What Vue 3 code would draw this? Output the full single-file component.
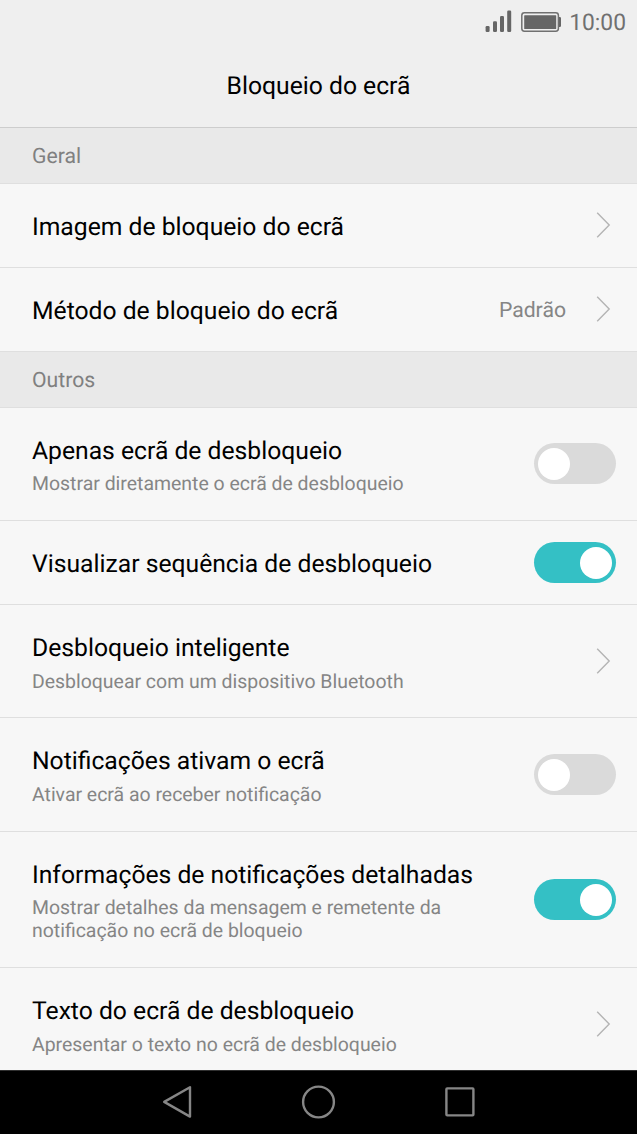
<script setup>
const sections = [
  {
    title: 'Geral',
    rows: [
      { label: 'Imagem de bloqueio do ecrã', control: 'arrow', size: 'single raised' },
      { label: 'Método de bloqueio do ecrã', value: 'Padrão', control: 'arrow', size: 'single raised' },
    ],
  },
  {
    title: 'Outros',
    rows: [
      { label: 'Apenas ecrã de desbloqueio', note: ['Mostrar diretamente o ecrã de desbloqueio'], control: 'off', size: 'double raised' },
      { label: 'Visualizar sequência de desbloqueio', control: 'on', size: 'single' },
      { label: 'Desbloqueio inteligente', note: ['Desbloquear com um dispositivo Bluetooth'], control: 'arrow', size: 'double spaced' },
      { label: 'Notificações ativam o ecrã', note: ['Ativar ecrã ao receber notificação'], control: 'off', size: 'double-tall spaced' },
      { label: 'Informações de notificações detalhadas', note: ['Mostrar detalhes da mensagem e remetente da', 'notificação no ecrã de bloqueio'], control: 'on', size: 'triple' },
      { label: 'Texto do ecrã de desbloqueio', note: ['Apresentar o texto no ecrã de desbloqueio'], control: 'arrow', size: 'double-tall spaced raised' },
    ],
  },
]
</script>

<template>
  <div class="screen">
    <div class="status">
      <svg class="signal" width="28" height="24" viewBox="0 0 28 24">
        <rect x="0.6" y="16" width="4" height="6" rx="1.2" />
        <rect x="8" y="11.2" width="4" height="10.8" rx="1.2" />
        <rect x="15" y="6" width="4" height="16" rx="1.2" />
        <rect x="22.2" y="0.6" width="4" height="21.4" rx="1.2" />
      </svg>
      <svg class="battery" width="41" height="20" viewBox="0 0 41 20">
        <rect x="0.8" y="0.8" width="36.6" height="18.4" rx="2.6" fill="none" stroke="#707070" stroke-width="1.5" />
        <rect x="3.2" y="3.2" width="32" height="13.8" rx="0.6" />
        <path d="M38 5h.8a1.3 1.3 0 0 1 1.2 1.3v7.4a1.3 1.3 0 0 1-1.2 1.3H38z" />
      </svg>
      <span class="clock">10:00</span>
    </div>
    <header class="header">Bloqueio do ecrã</header>
    <main class="list">
      <section v-for="section in sections" :key="section.title">
        <h2 class="heading">{{ section.title }}</h2>
        <div v-for="row in section.rows" :key="row.label" class="row" :class="row.size">
          <div class="text">
            <div class="label">{{ row.label }}</div>
            <div v-if="row.note" class="note">
              <div v-for="line in row.note" :key="line">{{ line }}</div>
            </div>
          </div>
          <span v-if="row.value" class="value">{{ row.value }}</span>
          <svg v-if="row.control === 'arrow'" class="arrow" width="16" height="28" viewBox="0 0 16 28">
            <path d="M1.2 1.8L13.2 14L1.2 26.2" />
          </svg>
          <div v-else class="switch" :class="row.control"><span class="knob"></span></div>
        </div>
      </section>
    </main>
    <nav class="nav">
      <svg width="32" height="36" viewBox="0 0 32 36">
        <path d="M29 3.2v29.4L3.2 17.9z" />
      </svg>
      <svg width="36" height="36" viewBox="0 0 36 36">
        <circle cx="17.5" cy="18" r="15.4" />
      </svg>
      <svg width="32" height="36" viewBox="0 0 32 36">
        <rect x="2.4" y="4.4" width="27" height="27" rx="0.8" />
      </svg>
    </nav>
  </div>
</template>

<style>
body {
  margin: 0;
}
</style>

<style scoped>
.screen {
  display: flex;
  flex-direction: column;
  width: 637px;
  height: 1134px;
  overflow: hidden;
  background: #f7f7f7;
  font-family: Roboto, "Liberation Sans", sans-serif;
  text-rendering: geometricPrecision;
  color: #000;
}
.status {
  display: flex;
  flex: none;
  align-items: center;
  justify-content: flex-end;
  height: 44px;
  padding-right: 11px;
  background: #efefef;
  color: #707070;
}
.status svg {
  fill: #666;
}
.signal {
  margin-right: 8px;
}
.battery {
  margin-right: 7.5px;
}
.clock {
  padding-top: 1px;
  font-size: 22.8px;
  line-height: 43px;
}
.header {
  flex: none;
  box-sizing: border-box;
  height: 84px;
  border-bottom: 1px solid #cdcdcd;
  background: #efefef;
  font-size: 24.7px;
  line-height: 85px;
  text-align: center;
}
.list {
  flex: 1;
  min-height: 0;
  overflow: hidden;
}
.heading {
  box-sizing: border-box;
  height: 56px;
  margin: 0;
  padding-left: 32px;
  border-bottom: 1px solid #dfdfdf;
  background: #e9e9e9;
  color: #808080;
  font-size: 21.2px;
  font-weight: 400;
  line-height: 57px;
}
.row {
  display: flex;
  box-sizing: border-box;
  align-items: center;
  border-bottom: 1px solid #dfdfdf;
  padding: 0 21px 0 32px;
}
.single {
  height: 84px;
}
.double {
  height: 113px;
}
.double-tall {
  height: 114px;
}
.triple {
  height: 136px;
}
.raised {
  padding-bottom: 1px;
}
.text {
  flex: 1;
  align-self: flex-start;
  padding-top: 29px;
  white-space: nowrap;
}
.label {
  font-size: 24.7px;
  line-height: 30px;
}
.note {
  margin-top: 5px;
  color: #858585;
  font-size: 19.44px;
  line-height: 23px;
}
.spaced .note {
  margin-top: 6px;
}
.value {
  margin-right: 30px;
  padding-top: 3px;
  color: #858585;
  font-size: 21.2px;
}
.arrow {
  margin-right: 4px;
  fill: none;
  stroke: #b4b4b4;
  stroke-width: 1.4;
}
.switch {
  display: flex;
  box-sizing: border-box;
  align-items: center;
  width: 82px;
  height: 41px;
  padding: 0 4px;
  border-radius: 21px;
}
.off {
  background: #dadada;
}
.on {
  justify-content: flex-end;
  background: #34c0c5;
}
.knob {
  width: 32px;
  height: 32px;
  border-radius: 50%;
  background: #fff;
}
.nav {
  display: flex;
  flex: none;
  box-sizing: border-box;
  align-items: center;
  justify-content: space-between;
  height: 64px;
  padding: 0 161px 1px;
  border-top: 1px solid #303030;
  background: #000;
}
.nav svg {
  fill: none;
  stroke: #868686;
  stroke-width: 2.4;
  stroke-linejoin: round;
}
</style>
